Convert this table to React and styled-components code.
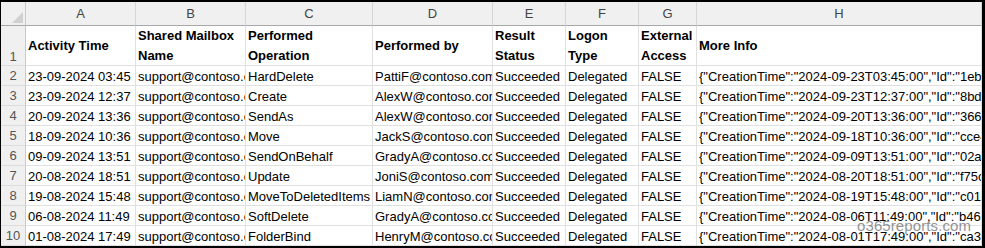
import React from "react";
import styled, { createGlobalStyle } from "styled-components";

const GlobalStyle = createGlobalStyle`
  * { box-sizing: border-box; }
  body {
    margin: 0;
    background: #ffffff;
    font-family: "Liberation Sans", Arial, sans-serif;
  }
`;

const letters = ["A", "B", "C", "D", "E", "F", "G", "H"];

const headers = [
  "Activity Time",
  "Shared Mailbox Name",
  "Performed Operation",
  "Performed by",
  "Result Status",
  "Logon Type",
  "External Access",
  "More Info",
];

const rows = [
  ["23-09-2024 03:45", "HardDelete", "PattiF@contoso.com", "2024-09-23T03:45:00", "1eb2c4a7"],
  ["23-09-2024 12:37", "Create", "AlexW@contoso.com", "2024-09-23T12:37:00", "8bd31f02"],
  ["20-09-2024 13:36", "SendAs", "AlexW@contoso.com", "2024-09-20T13:36:00", "366a9e1c"],
  ["18-09-2024 10:36", "Move", "JackS@contoso.com", "2024-09-18T10:36:00", "cce4b7d5"],
  ["09-09-2024 13:51", "SendOnBehalf", "GradyA@contoso.com", "2024-09-09T13:51:00", "02a8f6e3"],
  ["20-08-2024 18:51", "Update", "JoniS@contoso.com", "2024-08-20T18:51:00", "f75c0d91"],
  ["19-08-2024 15:48", "MoveToDeletedItems", "LiamN@contoso.com", "2024-08-19T15:48:00", "c01e7b48"],
  ["06-08-2024 11:49", "SoftDelete", "GradyA@contoso.com", "2024-08-06T11:49:00", "b46d2a07"],
  ["01-08-2024 17:49", "FolderBind", "HenryM@contoso.com", "2024-08-01T17:49:00", "ca3f9e62"],
];

const Frame = styled.div`
  position: relative;
  width: 985px;
  height: 248px;
  border-style: solid;
  border-color: #000;
  border-width: 2px 3px 2px 1px;
  overflow: hidden;
`;

const Sheet = styled.div`
  display: grid;
  grid-template-columns: 25px 110px 110px 127px 120px 73px 73px 58px 1fr;
  grid-template-rows: 24px 40px repeat(9, 20px);
  font-size: 13px;
  color: #000;
`;

const Corner = styled.div`
  background: #f0f0f0;
  border-right: 1px solid #c9c9c9;
  border-bottom: 1px solid #a8a8a8;
  display: flex;
  align-items: flex-end;
  justify-content: flex-end;
  padding: 0 2px 2px 0;
`;

const ColHead = styled.div`
  background: #f0f0f0;
  color: #444;
  border-right: 1px solid #d6d6d6;
  border-bottom: 1px solid #a8a8a8;
  display: flex;
  align-items: center;
  justify-content: center;
  font-size: 13px;
`;

const RowHead = styled.div`
  background: #f0f0f0;
  color: #555;
  border-right: 1px solid #c9c9c9;
  border-bottom: 1px solid #dcdcdc;
  display: flex;
  justify-content: center;
  align-items: ${(p) => (p.$bottom ? "flex-end" : "center")};
  padding-bottom: ${(p) => (p.$bottom ? "1px" : "0")};
  font-size: 13px;
`;

const HeadCell = styled.div`
  border-right: 1px solid #e0e0e0;
  border-bottom: 1px solid #e0e0e0;
  display: flex;
  align-items: center;
  padding: 0 2px;
  font-weight: bold;
  line-height: 20px;
  overflow: hidden;
`;

const Cell = styled.div`
  border-right: 1px solid #e0e0e0;
  border-bottom: 1px solid #e0e0e0;
  padding: 1px 2px 0;
  line-height: 19px;
  white-space: nowrap;
  overflow: hidden;
`;

const Watermark = styled.div`
  position: absolute;
  left: 856px;
  top: 215px;
  font-size: 15px;
  color: rgba(110, 110, 110, 0.75);
  letter-spacing: 0.1px;
  pointer-events: none;
`;

const CornerMark = () => (
  <svg width="11" height="11" viewBox="0 0 11 11">
    <polygon points="11,0 11,11 0,11" fill="#d0d0d0" />
  </svg>
);

const App = () => {
  return (
    <>
      <GlobalStyle />
      <Frame>
        <Sheet>
          <Corner>
            <CornerMark />
          </Corner>
          {letters.map((l) => (
            <ColHead key={l}>{l}</ColHead>
          ))}

          <RowHead $bottom>1</RowHead>
          {headers.map((h) => (
            <HeadCell key={h}>{h}</HeadCell>
          ))}

          {rows.map((r, i) => (
            <React.Fragment key={i}>
              <RowHead>{i + 2}</RowHead>
              <Cell>{r[0]}</Cell>
              <Cell>support@contoso.com</Cell>
              <Cell>{r[1]}</Cell>
              <Cell>{r[2]}</Cell>
              <Cell>Succeeded</Cell>
              <Cell>Delegated</Cell>
              <Cell>FALSE</Cell>
              <Cell>
                {`{"CreationTime":"${r[3]}","Id":"${r[4]}-5d1e-4c7a-9f3b","Operation":"${r[1]}"}`}
              </Cell>
            </React.Fragment>
          ))}
        </Sheet>
        <Watermark>o365reports.com</Watermark>
      </Frame>
    </>
  );
};

export default App;
